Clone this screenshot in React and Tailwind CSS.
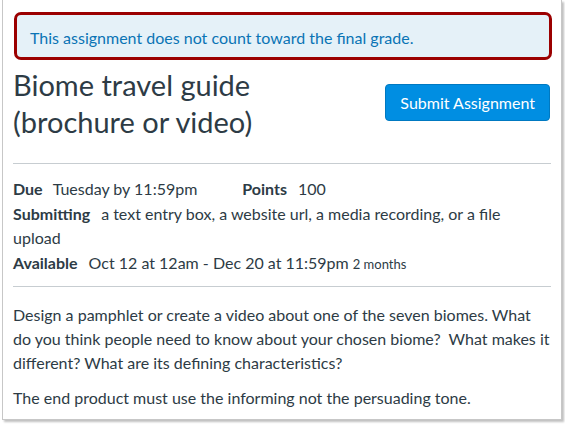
export default function App() {
  return (
    <div className="w-[565px] h-[426px] bg-white overflow-hidden" style={{ fontFamily: 'Lato, "Open Sans", sans-serif' }}>
      <div className="ml-[2px] w-[560px] h-[420px] border-x border-b border-[#c7c7c7] shadow-[2px_2px_2px_rgba(0,0,0,0.25)] bg-white">
        {/* Alert */}
        <div className="pt-[12px] pl-[11px] pr-[9px]">
          <div className="h-[48px] rounded-[7px] border-[3px] border-[#9b0000] bg-[#e5f1f8] flex items-center pl-[13px] pt-[3px]">
            <span className="text-[16px] text-[#0a74b5]">This assignment does not count toward the final grade.</span>
          </div>
        </div>

        {/* Title row */}
        <div className="px-[10px] flex justify-between items-start mt-[6px]">
          <h1 className="text-[29px] leading-[37px] text-[#2d3b45] font-normal w-[300px]">
            Biome travel guide (brochure or video)
          </h1>
          <button className="mt-[18px] mr-[1px] h-[37px] px-[14px] rounded-[4px] bg-[#008ee2] border border-[#0079c1] text-white text-[16px]">
            Submit Assignment
          </button>
        </div>

        <div className="mx-[10px] mt-[23px] border-t border-[#c7cdd1]" />

        {/* Details */}
        <div className="px-[10px] pt-[13px] pb-[10px] text-[16px] leading-[24.5px] text-[#2d3b45]">
          <div className="flex">
            <span className="font-bold">Due</span>
            <span className="ml-[10px]">Tuesday by 11:59pm</span>
            <span className="font-bold ml-[45px]">Points</span>
            <span className="ml-[11px]">100</span>
          </div>
          <div>
            <b className="mr-[11px]">Submitting</b>
            a text entry box, a website url, a media recording, or a file upload
          </div>
          <div>
            <span className="font-bold">Available</span>
            <span className="ml-[11px]">Oct 12 at 12am - Dec 20 at 11:59pm</span>
            <span className="text-[13px] ml-[4px]">2 months</span>
          </div>
        </div>

        <div className="mx-[10px] border-t border-[#c7cdd1]" />

        {/* Description */}
        <div className="px-[10px] pt-[16px] text-[16px] leading-[24px] text-[#2d3b45]">
          <p>
            Design a pamphlet or create a video about one of the seven biomes. What do you think people need to know about your chosen biome?&nbsp; What makes it different? What are its defining characteristics?
          </p>
          <p className="mt-[11px]">The end product must use the informing not the persuading tone.</p>
        </div>
      </div>
    </div>
  );
}
